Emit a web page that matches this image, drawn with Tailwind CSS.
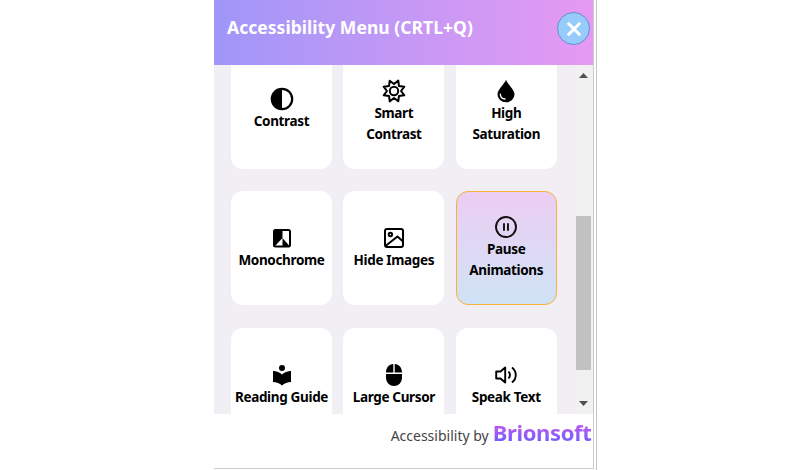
<!DOCTYPE html>
<html lang="en">
<head>
<meta charset="utf-8">
<title>Accessibility Menu</title>
<script src="https://cdn.jsdelivr.net/npm/@tailwindcss/browser@4"></script>
</head>
<body class="bg-white h-[470px] overflow-hidden font-['Noto_Sans','Open_Sans',sans-serif]">
<div class="ml-[214px] w-[383px] h-[470px] border-r border-[#c4c4c4] pr-[2px]">
<div class="w-[380px] h-[469px] border-r border-b border-[#cccccc] flex flex-col bg-white">
  <header class="h-[65px] shrink-0 flex items-start justify-between bg-linear-to-r from-[#9f96f8] to-[#e699f2] pl-[13px] pr-[3px]">
    <h1 class="mt-[15px] text-[17.5px] leading-6 font-bold text-white whitespace-nowrap tracking-[0.04px]">Accessibility Menu (CRTL+Q)</h1>
    <button class="mt-3 size-[33px] rounded-full bg-[#97cbfc] border border-[#5b91d4] flex items-center justify-center" aria-label="Close">
      <svg class="size-4" viewBox="0 0 16 16" fill="none" stroke="#fff" stroke-width="3"><path d="M1.8 1.8 14.2 14.2M14.2 1.8 1.8 14.2"/></svg>
    </button>
  </header>
  <div class="h-[349px] shrink-0 flex overflow-hidden bg-[#f1eff3]">
    <main class="w-[361px] pl-[17px] -mt-[10.4px] grid grid-cols-[101px_101px_101px] auto-rows-[114px] gap-x-[11.400px] gap-y-[22.6px] text-[13.5px] leading-[21px] font-bold tracking-[-0.34px] text-black text-center whitespace-nowrap">
      <div class="bg-white rounded-[12px] flex flex-col items-center justify-center pb-[5px]">
        <svg class="size-6" viewBox="0 0 24 24"><circle cx="12" cy="12" r="10.2" fill="none" stroke="#000" stroke-width="2.200"/><path d="M12 1.5a10.500 10.500 0 0 0 0 21z"/></svg>
        <span>Contrast</span>
      </div>
      <div class="bg-white rounded-[12px] flex flex-col items-center justify-center">
        <svg class="size-6" viewBox="0 0 24 24" fill="none" stroke="#000" stroke-width="2" stroke-linejoin="round"><path d="M12 .8 14.700 5.500 19.900 4.100 18.500 9.300 23.200 12 18.500 14.700 19.900 19.900 14.700 18.500 12 23.200 9.300 18.500 4.100 19.900 5.500 14.700 .8 12 5.500 9.300 4.100 4.100 9.300 5.500z" transform="rotate(22.500 12 12)"/><circle cx="12" cy="12" r="4.200"/></svg>
        <span>Smart<br>Contrast</span>
      </div>
      <div class="bg-white rounded-[12px] flex flex-col items-center justify-center">
        <svg class="size-6" viewBox="0 0 24 24"><path d="M12 .8C10.500 5 3.500 10.500 3.500 15.500a8.500 7.800 0 0 0 17 0C20.500 10.500 13.500 5 12 .8z"/><path d="M6.300 15.200c.2 2.900 2 4.600 4.700 4.800" fill="none" stroke="#fff" stroke-width="1.400" stroke-linecap="round"/></svg>
        <span>High<br>Saturation</span>
      </div>
      <div class="bg-white rounded-[12px] flex flex-col items-center justify-center pt-px">
        <svg class="size-6" viewBox="0 0 24 24"><rect x="4" y="4" width="16" height="16.500" rx="1.500" fill="#fff" stroke="#000" stroke-width="2"/><path d="M4 4h8.500v8L5.500 19.500H4z"/><path d="M12.500 12 19.500 20h-7z"/></svg>
        <span>Monochrome</span>
      </div>
      <div class="bg-white rounded-[12px] flex flex-col items-center justify-center pt-px">
        <svg class="size-6" viewBox="0 0 24 24" fill="none" stroke="#000" stroke-width="2" stroke-linejoin="round"><rect x="3" y="3" width="18" height="18" rx="2"/><circle cx="8.400" cy="8.500" r="1.700"/><path d="M3.500 20 15.500 10.500 21 15.500"/></svg>
        <span>Hide Images</span>
      </div>
      <div class="rounded-[12px] border border-[#f8b13c] bg-linear-to-b from-[#eccdf3] to-[#cfe3f5] flex flex-col items-center justify-center">
        <svg class="size-6" viewBox="0 0 24 24" fill="none" stroke="#111" stroke-width="1.900" stroke-linecap="round"><circle cx="12" cy="12" r="10"/><path d="M10 9v6M14 9v6"/></svg>
        <span>Pause<br>Animations</span>
      </div>
      <div class="bg-white rounded-[12px] flex flex-col items-center justify-center pt-px">
        <svg class="size-6" viewBox="0 0 24 24"><circle cx="12" cy="5" r="3"/><path d="M12 11.500C9.600 9.300 6.500 8 3 8v11c3.500 0 6.600 1.300 9 3.500 2.400-2.200 5.500-3.500 9-3.500V8c-3.500 0-6.600 1.300-9 3.500z"/></svg>
        <span>Reading Guide</span>
      </div>
      <div class="bg-white rounded-[12px] flex flex-col items-center justify-center pt-px">
        <svg class="size-6" viewBox="0 0 24 24"><path d="M11.300 1v8.500H4C4 4.800 7 1.300 11.300 1zM12.700 1v8.500H20C20 4.800 17 1.300 12.700 1zM4 11h16v4a8 8 0 0 1-16 0z"/></svg>
        <span>Large Cursor</span>
      </div>
      <div class="bg-white rounded-[12px] flex flex-col items-center justify-center pt-px">
        <svg class="size-6" viewBox="0 0 24 24" fill="none" stroke="#000" stroke-width="1.900"><path d="M2.200 8.500h4.300l4.700-4v15l-4.700-4H2.200z" stroke-linejoin="round"/><path d="M14.500 8.500c1.700 2 1.700 5 0 7M18 4.500c5 4 5 11 0 15"/></svg>
        <span>Speak Text</span>
      </div>
    </main>
    <div class="w-[18px] h-full bg-[#f1f1f1] flex flex-col items-center pl-px pr-[2px]">
      <svg class="mt-2 w-[9px] h-[5px] shrink-0" viewBox="0 0 9 5"><path d="M0 5 4.500 0 9 5z" fill="#505050"/></svg>
      <div class="mt-[138px] w-[15px] h-[154px] shrink-0 bg-[#c1c1c1]"></div>
      <svg class="mt-[31px] w-[9px] h-[5px] shrink-0" viewBox="0 0 9 5"><path d="M0 0 4.500 5 9 0z" fill="#505050"/></svg>
    </div>
  </div>
  <footer class="flex items-baseline justify-end gap-1 pr-[1.500px] pt-[2px] whitespace-nowrap">
    <span class="text-[14px] text-[#444444]">Accessibility by</span>
    <span class="text-[22px] leading-8 font-bold tracking-[-0.35px] bg-linear-to-b from-[#c254ec] from-25% to-[#6a5cff] to-85% bg-clip-text text-transparent">Brionsoft</span>
  </footer>
</div>
</div>
</body>
</html>
